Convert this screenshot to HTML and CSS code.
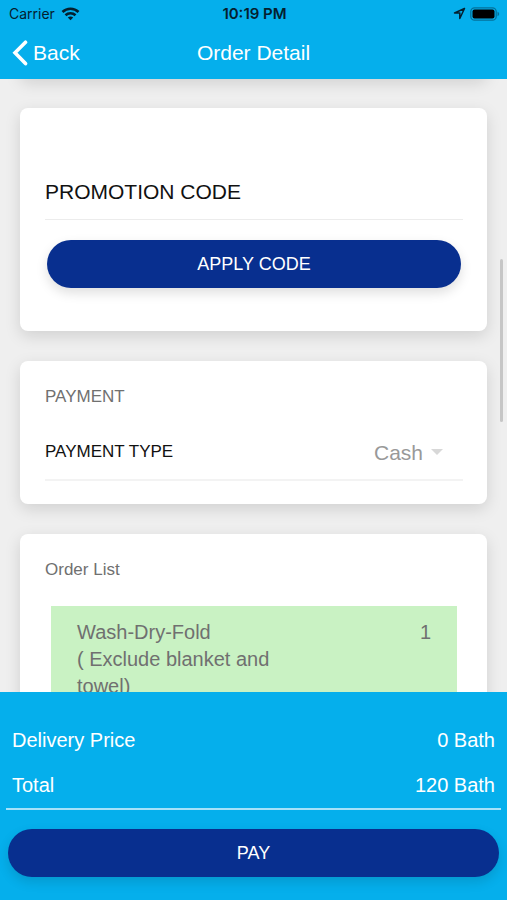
FILE: index.html
```html
<!DOCTYPE html>
<html lang="en">
<head>
  <meta charset="utf-8">
  <meta name="viewport" content="width=device-width, initial-scale=1">
  <title>Order Detail</title>
  <link rel="stylesheet" href="styles.css">
</head>
<body>
  <header class="top">
    <div class="status">
      <div class="status-left">
        <span>Carrier</span>
        <svg width="19" height="14" viewBox="0 0 18 14" fill="none" stroke="#04202f" stroke-width="2.600" aria-hidden="true">
          <path d="M1 5C5.4.7 12.600.7 17 5"/>
          <path d="M4 8.300C6.800 5.600 11.200 5.600 14 8.300"/>
          <path d="M6.300 10.400C7.800 9.100 10.200 9.100 11.700 10.400L9 13.200Z" fill="#04202f" stroke="none"/>
        </svg>
      </div>
      <strong class="time">10:19 PM</strong>
      <div class="status-right">
        <svg width="13" height="13" viewBox="0 0 13 13" fill="none" stroke="#04202f" stroke-width="1.500" stroke-linejoin="round" aria-hidden="true">
          <path d="M11.500 1.500L1.500 6H6.800V11.500Z"/>
        </svg>
        <svg width="30" height="14" viewBox="0 0 30 14" aria-hidden="true">
          <rect x=".8" y=".8" width="25.400" height="12.400" rx="3.800" fill="none" stroke="#04719a" stroke-width="1.300"/>
          <rect x="2.500" y="2.500" width="22" height="9" rx="2" fill="#000"/>
          <path d="M27.500 4.800C29.700 5.500 29.700 8.500 27.500 9.200Z" fill="#04719a"/>
        </svg>
      </div>
    </div>
    <nav class="nav">
      <a class="back" href="#">
        <svg width="16" height="26" viewBox="0 0 16 26" fill="none" stroke="#fff" stroke-width="3.600" stroke-linecap="round" aria-hidden="true">
          <path d="M13.500 2.200L3 12.800L13.500 23.600"/>
        </svg>
        Back
      </a>
      <h1 class="title">Order Detail</h1>
    </nav>
  </header>

  <main class="content">
    <section class="card promo">
      <input class="promo-input" type="text" placeholder="PROMOTION CODE" aria-label="Promotion code">
      <button class="pill" type="button">APPLY CODE</button>
    </section>

    <section class="card payment">
      <h2 class="heading">PAYMENT</h2>
      <div class="field">
        <label for="type">PAYMENT TYPE</label>
        <div class="picker">
          <select id="type"><option>Cash</option></select>
          <svg width="12" height="6" viewBox="0 0 12 6" aria-hidden="true"><path d="M0 0H12L6 6Z" fill="#d8d8d8"/></svg>
        </div>
      </div>
    </section>

    <section class="card orders">
      <h2 class="heading">Order List</h2>
      <div class="item">
        <p class="item-name">Wash-Dry-Fold<br>( Exclude blanket and towel)</p>
        <span>1</span>
      </div>
    </section>
    <div class="scrollbar"></div>
  </main>

  <footer class="summary">
    <dl class="totals">
      <div class="row"><dt>Delivery Price</dt><dd>0 Bath</dd></div>
      <div class="row"><dt>Total</dt><dd>120 Bath</dd></div>
    </dl>
    <button class="pill pay" type="button">PAY</button>
  </footer>
</body>
</html>
```
FILE: styles.css
```css
* {
  box-sizing: border-box;
}

body {
  margin: 0;
  height: 100vh;
  display: flex;
  flex-direction: column;
  background: #efefef;
  font-family: "Liberation Sans", Arial, sans-serif;
  color: #707070;
}

h1, h2, p, dl, dd {
  margin: 0;
  font-weight: normal;
}

.top {
  position: relative;
  z-index: 1;
  flex: none;
  background: #05afec;
  color: #fff;
}

.status {
  display: grid;
  grid-template-columns: 1fr auto 1fr;
  align-items: center;
  height: 27px;
  padding: 0 7px 0 9px;
  font: 14px/27px Inter, sans-serif;
  color: #04202f;
}

.status-left,
.status-right {
  display: flex;
  align-items: center;
  gap: 6px;
}

.status-right {
  justify-content: flex-end;
  gap: 4px;
}

.time {
  font-size: 15px;
  font-weight: 600;
}

.nav {
  display: grid;
  grid-template-columns: 1fr auto 1fr;
  align-items: center;
  height: 52px;
  padding: 0 12px;
}

.back {
  display: flex;
  align-items: center;
  gap: 5px;
  color: #fff;
  font-size: 21px;
  text-decoration: none;
}

.title {
  font-size: 21px;
}

.content {
  position: relative;
  flex: 1;
  min-height: 0;
  overflow: hidden;
  display: flex;
  flex-direction: column;
  gap: 30px;
  padding: 0 20px;
}

/* Lower edge of the card scrolled under the header */
.content::before {
  content: "";
  flex: none;
  height: 40px;
  margin-top: -41px;
  border-radius: 8px;
  background: #fff;
  box-shadow: 0 5px 16px rgba(0, 0, 0, .13);
}

.card {
  flex: none;
  padding: 24px 24px 23px 25px;
  border-radius: 8px;
  background: #fff;
  box-shadow: 0 5px 16px rgba(0, 0, 0, .13);
}

.promo {
  padding-top: 56px;
  padding-bottom: 43px;
}

.promo-input {
  display: block;
  width: 100%;
  height: 56px;
  margin-bottom: 20px;
  padding: 0;
  border: 0;
  border-bottom: 1px solid #ececec;
  background: none;
  font: 21px "Liberation Sans", Arial, sans-serif;
  color: #111;
}

.promo-input::placeholder {
  color: #111;
  opacity: 1;
}

.pill {
  display: block;
  width: calc(100% - 4px);
  height: 48px;
  margin: 0 auto;
  padding: 0;
  border: 0;
  border-radius: 24px;
  background: #082f8f;
  box-shadow: 0 5px 12px rgba(0, 0, 0, .13);
  color: #fff;
  font: 18px "Liberation Sans", Arial, sans-serif;
}

.heading {
  font-size: 17px;
  line-height: 24px;
}

.field {
  display: flex;
  justify-content: space-between;
  align-items: center;
  height: 56px;
  margin-top: 16px;
  border-bottom: 2px solid #f3f3f3;
  color: #111;
  font-size: 17px;
}

.picker {
  display: flex;
  align-items: center;
  gap: 7px;
  padding-right: 20px;
}

.picker select {
  appearance: none;
  padding: 0;
  border: 0;
  background: none;
  color: #999;
  font: 21px "Liberation Sans", Arial, sans-serif;
}

.item {
  display: flex;
  justify-content: space-between;
  margin: 24px 6px 0;
  padding: 13px 26px;
  background: #c9f2c3;
  font-size: 20px;
  line-height: 27px;
}

.item-name {
  width: 60%;
}

.scrollbar {
  position: absolute;
  top: 180px;
  right: 4px;
  width: 3px;
  height: 163px;
  border-radius: 2px;
  background: #c6c6c6;
}

.summary {
  position: relative;
  flex: none;
  padding: 26px 6px 23px;
  background: #05afec;
  color: #fff;
}

.totals {
  margin-bottom: 19px;
  border-bottom: 2px solid #a5e2f9;
}

.row {
  display: flex;
  justify-content: space-between;
  padding: 0 6px;
  font-size: 20px;
  line-height: 45px;
}

.pay {
  width: calc(100% - 4px);
}
```
